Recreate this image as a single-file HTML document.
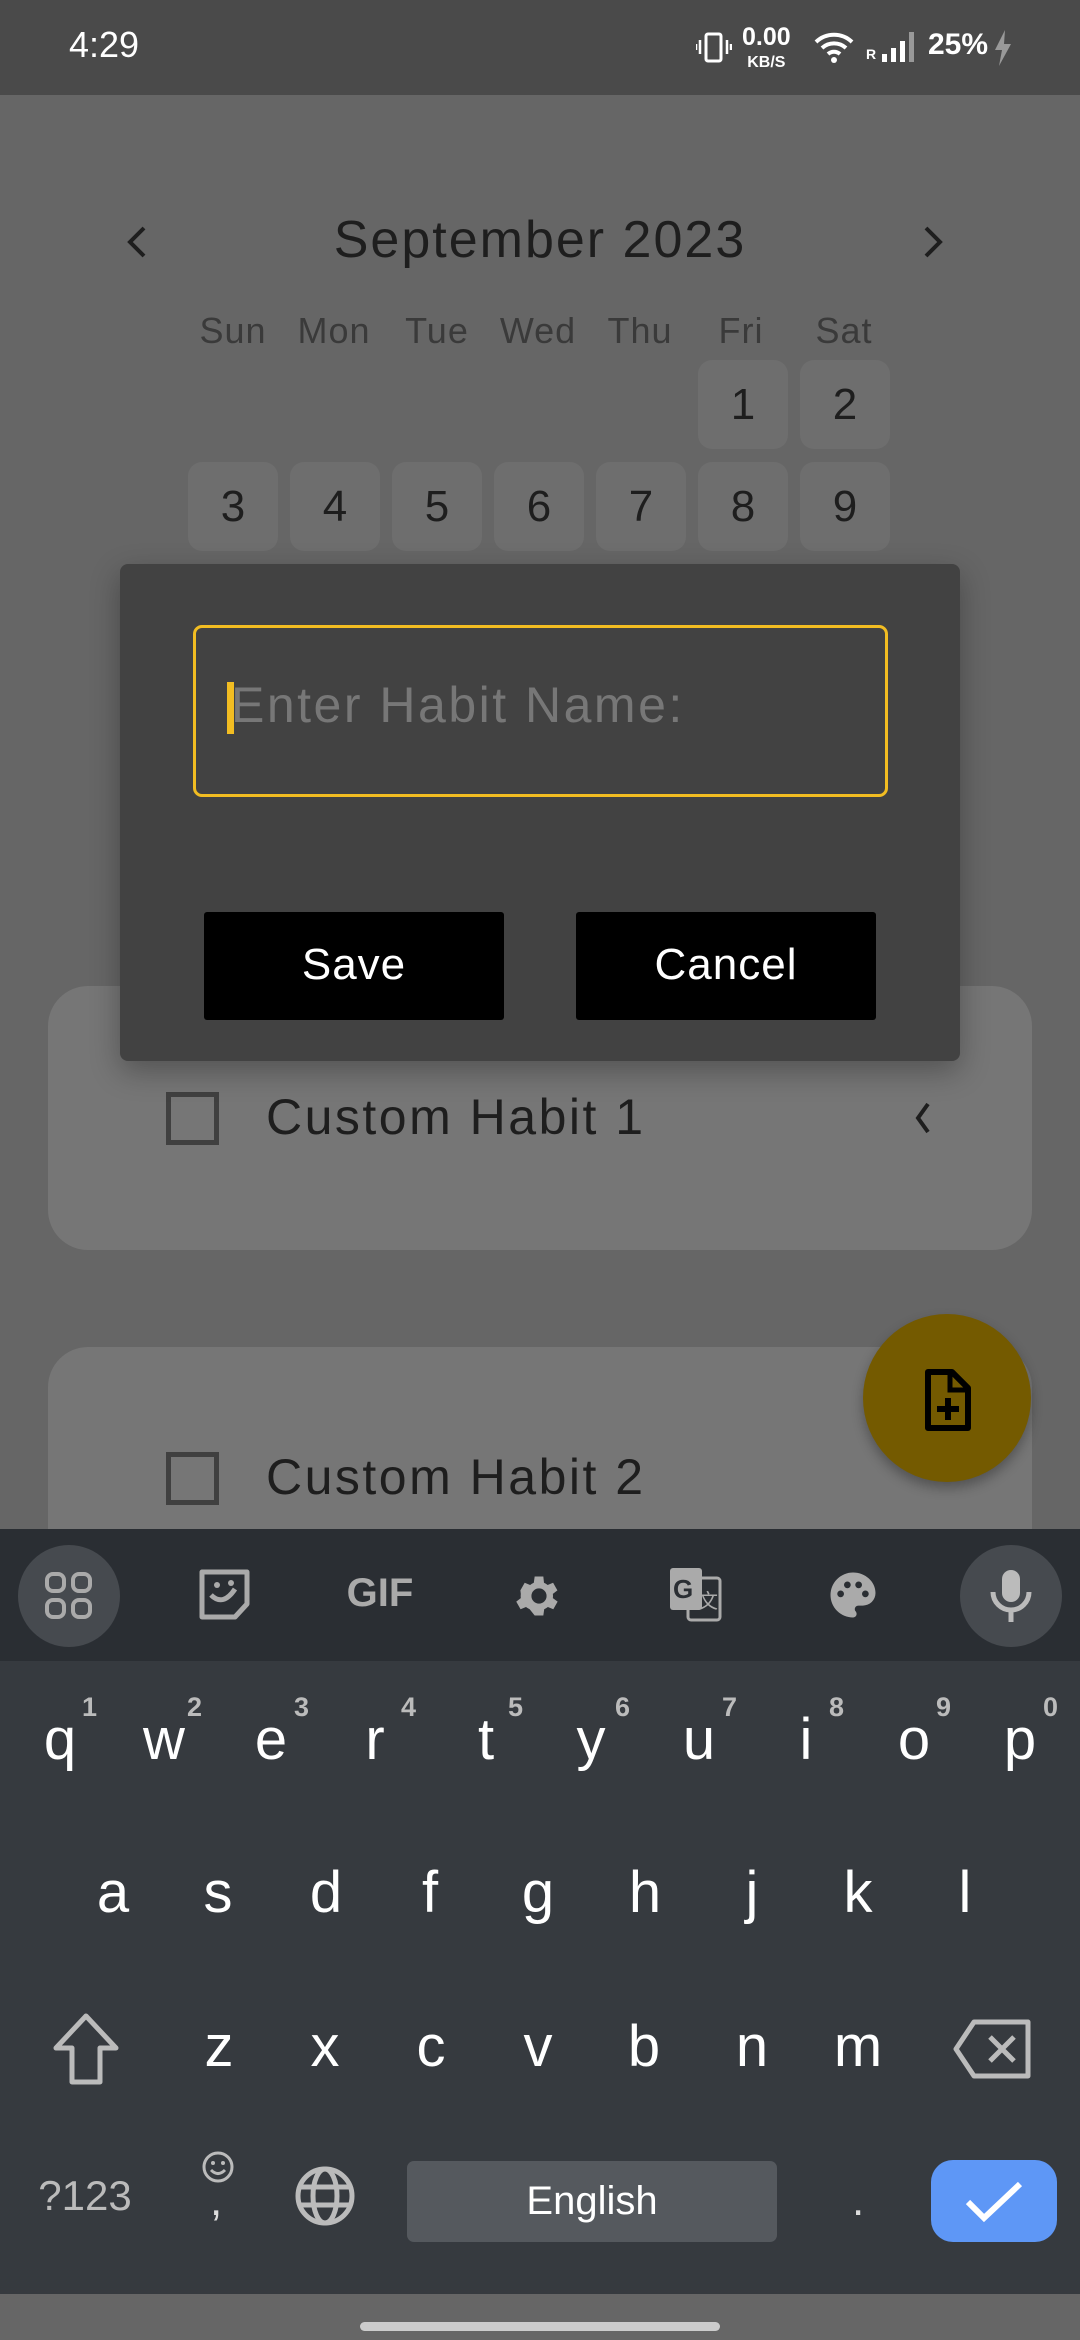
<!DOCTYPE html>
<html><head><meta charset="utf-8"><style>
*{margin:0;padding:0;box-sizing:border-box}
body{width:1080px;height:2340px;background:#666;position:relative;overflow:hidden;font-family:"Liberation Sans",sans-serif}
.a{position:absolute}
.c{text-align:center}
.wd{position:absolute;top:310px;width:100px;text-align:center;font-size:36px;color:#3a3a3a;letter-spacing:1px}
.day{position:absolute;width:90px;height:89px;border-radius:14px;background:#6e6e6e;color:#1e1e1e;font-size:44px;text-align:center;line-height:89px}
.k{position:absolute;width:100px;text-align:center;color:#fff;font-size:58px;line-height:70px}
.n{position:absolute;font-size:27px;color:#bbb;font-weight:bold}
</style></head><body>
<!-- status bar -->
<div class="a" style="left:0;top:0;width:1080px;height:95px;background:#4a4a4a"></div>
<div class="a" style="left:69px;top:24px;font-size:36px;color:#fff">4:29</div>
<svg class="a" style="left:696px;top:30px" width="36" height="36" viewBox="0 0 36 36"><rect x="10" y="4" width="15" height="27" rx="2" fill="none" stroke="#fff" stroke-width="3"/><path d="M4 10v14M31 10v14M0 14v6M35 14v6" stroke="#fff" stroke-width="2.5"/></svg>
<div class="a c" style="left:742px;top:26px;font-size:25px;color:#fff;font-weight:bold;line-height:22px">0.00<br><span style="font-size:16px">KB/S</span></div>
<svg class="a" style="left:814px;top:30px" width="40" height="34" viewBox="0 0 40 34"><path d="M2 12a26 26 0 0 1 36 0M8 18a18 18 0 0 1 24 0M14 24a9 9 0 0 1 12 0" stroke="#fff" stroke-width="4" fill="none"/><circle cx="20" cy="30" r="3" fill="#fff"/></svg>
<div class="a" style="left:866px;top:46px;font-size:14px;color:#fff;font-weight:bold">R</div>
<svg class="a" style="left:880px;top:30px" width="40" height="34"><rect x="2" y="24" width="5" height="8" fill="#fff"/><rect x="11" y="18" width="5" height="14" fill="#fff"/><rect x="20" y="11" width="5" height="21" fill="#fff"/><rect x="29" y="2" width="5" height="30" fill="#999"/></svg>
<div class="a" style="left:928px;top:28px;font-size:30px;color:#fff;font-weight:bold">25%</div>
<svg class="a" style="left:993px;top:30px" width="20" height="36"><path d="M12 0L2 20h7l-3 16 12-22h-7z" fill="#999"/></svg>

<!-- calendar -->
<svg class="a" style="left:122px;top:222px" width="30" height="40"><path d="M22 6L8 20l14 14" stroke="#1e1e1e" stroke-width="4" fill="none"/></svg>
<svg class="a" style="left:918px;top:222px" width="30" height="40"><path d="M8 6l14 14L8 34" stroke="#1e1e1e" stroke-width="4" fill="none"/></svg>
<div class="a c" style="left:240px;top:210px;width:600px;font-size:52px;color:#1e1e1e;letter-spacing:2px">September 2023</div>
<div class="wd" style="left:183px">Sun</div><div class="wd" style="left:284px">Mon</div><div class="wd" style="left:387px">Tue</div><div class="wd" style="left:488px">Wed</div><div class="wd" style="left:590px">Thu</div><div class="wd" style="left:691px">Fri</div><div class="wd" style="left:794px">Sat</div>
<div class="day" style="left:698px;top:360px">1</div><div class="day" style="left:800px;top:360px">2</div>
<div class="day" style="left:188px;top:462px">3</div><div class="day" style="left:290px;top:462px">4</div><div class="day" style="left:392px;top:462px">5</div><div class="day" style="left:494px;top:462px">6</div><div class="day" style="left:596px;top:462px">7</div><div class="day" style="left:698px;top:462px">8</div><div class="day" style="left:800px;top:462px">9</div>

<!-- cards -->
<div class="a" style="left:48px;top:986px;width:984px;height:264px;border-radius:40px;background:#767676"></div>
<div class="a" style="left:166px;top:1092px;width:53px;height:53px;border:5px solid #404040"></div>
<div class="a" style="left:266px;top:1088px;font-size:50px;color:#1e1e1e;letter-spacing:2.5px">Custom Habit 1</div>
<svg class="a" style="left:910px;top:1098px" width="26" height="40"><path d="M18 6L8 20l10 14" stroke="#1e1e1e" stroke-width="4" fill="none"/></svg>
<div class="a" style="left:48px;top:1347px;width:984px;height:300px;border-radius:40px;background:#767676"></div>
<div class="a" style="left:166px;top:1452px;width:53px;height:53px;border:5px solid #404040"></div>
<div class="a" style="left:266px;top:1448px;font-size:50px;color:#1e1e1e;letter-spacing:2.5px">Custom Habit 2</div>
<div class="a" style="left:863px;top:1314px;width:168px;height:168px;border-radius:50%;background:#745a00;box-shadow:0 6px 12px rgba(0,0,0,.3)"></div>
<svg class="a" style="left:922px;top:1368px" width="52" height="66" viewBox="0 0 52 66"><path d="M6 4h24l16 16v40H6z" fill="none" stroke="#000" stroke-width="6" stroke-linejoin="round"/><path d="M28 4v18h18" fill="none" stroke="#000" stroke-width="5"/><path d="M26 30v22M15 41h22" stroke="#000" stroke-width="6"/></svg>

<!-- dialog -->
<div class="a" style="left:120px;top:564px;width:840px;height:497px;background:#424242;border-radius:8px;box-shadow:0 10px 30px rgba(0,0,0,.3)"></div>
<div class="a" style="left:193px;top:625px;width:695px;height:172px;border:3px solid #f2bd22;border-radius:9px"></div>
<div class="a" style="left:227px;top:682px;width:7px;height:52px;background:#f2bd22"></div>
<div class="a" style="left:231px;top:676px;font-size:50px;color:#777;letter-spacing:2.5px">Enter Habit Name:</div>
<div class="a c" style="left:204px;top:912px;width:300px;height:108px;background:#000;border-radius:3px;color:#fff;font-size:44px;line-height:106px;letter-spacing:1px">Save</div>
<div class="a c" style="left:576px;top:912px;width:300px;height:108px;background:#000;border-radius:3px;color:#fff;font-size:44px;line-height:106px;letter-spacing:1px">Cancel</div>

<!-- keyboard -->
<div class="a" style="left:0;top:1529px;width:1080px;height:132px;background:#2a2e33"></div>
<div class="a" style="left:0;top:1661px;width:1080px;height:633px;background:#363a3f"></div>
<div class="a" style="left:0;top:2294px;width:1080px;height:46px;background:#666"></div>
<div class="a" style="left:360px;top:2322px;width:360px;height:9px;border-radius:5px;background:#ccc"></div>

<div class="a" style="left:18px;top:1545px;width:102px;height:102px;border-radius:50%;background:#464a4f"></div>
<svg class="a" style="left:45px;top:1572px" width="48" height="48"><g fill="none" stroke="#aaa" stroke-width="4"><rect x="2" y="2" width="17" height="17" rx="6"/><rect x="28" y="2" width="17" height="17" rx="6"/><rect x="2" y="28" width="17" height="17" rx="6"/><rect x="28" y="28" width="17" height="17" rx="6"/></g></svg>
<svg class="a" style="left:197px;top:1567px" width="56" height="56"><path d="M5 5h45v32L38 50H5z" fill="none" stroke="#aaa" stroke-width="5" stroke-linejoin="round"/><path d="M14 28q12 12 24-6" fill="none" stroke="#aaa" stroke-width="5"/><circle cx="20" cy="18" r="3" fill="#aaa"/><circle cx="34" cy="16" r="3" fill="#aaa"/></svg>
<div class="a c" style="left:340px;top:1571px;width:80px;font-size:40px;font-weight:bold;color:#aaa">GIF</div>
<svg class="a" style="left:513px;top:1570px" width="52" height="52" viewBox="0 0 24 24"><path fill="#aaa" d="M19.4 13a7.5 7.5 0 0 0 0-2l2.1-1.6-2-3.5-2.5 1a7 7 0 0 0-1.700-1L15 3h-4l-.4 2.9a7 7 0 0 0-1.7 1l-2.5-1-2 3.5L4.6 11a7.5 7.5 0 0 0 0 2l-2.1 1.6 2 3.5 2.5-1a7 7 0 0 0 1.7 1L11 21h4l.4-2.9a7 7 0 0 0 1.7-1l2.5 1 2-3.5zM13 15.5a3.5 3.5 0 1 1 0-7 3.5 3.5 0 0 1 0 7z" transform="translate(-1 0)"/></svg>
<svg class="a" style="left:668px;top:1566px" width="56" height="58"><rect x="2" y="2" width="32" height="42" rx="3" fill="#aaa"/><rect x="20" y="12" width="32" height="42" rx="3" fill="none" stroke="#aaa" stroke-width="3"/><text x="5" y="32" font-size="26" font-weight="bold" fill="#2a2e33" font-family="Liberation Sans">G</text><text x="30" y="42" font-size="20" fill="#aaa" font-family="Noto Sans CJK SC, sans-serif">文</text></svg>
<svg class="a" style="left:826px;top:1568px" width="54" height="54" viewBox="0 0 24 24"><path fill="#aaa" d="M12 2a10 10 0 0 0 0 20c1 0 1.6-.8 1.6-1.600 0-.4-.2-.8-.4-1.1-.3-.3-.4-.6-.4-1 0-.9.7-1.6 1.6-1.6h1.9A5.6 5.6 0 0 0 22 11.1C22 6.1 17.5 2 12 2zM6.5 13a1.5 1.5 0 1 1 0-3 1.5 1.5 0 0 1 0 3zm3-4a1.5 1.5 0 1 1 0-3 1.5 1.5 0 0 1 0 3zm5 0a1.5 1.5 0 1 1 0-3 1.5 1.5 0 0 1 0 3zm3 4a1.5 1.5 0 1 1 0-3 1.5 1.5 0 0 1 0 3z"/></svg>
<div class="a" style="left:960px;top:1545px;width:102px;height:102px;border-radius:50%;background:#464a4f"></div>
<svg class="a" style="left:986px;top:1568px" width="50" height="56"><rect x="16" y="2" width="18" height="32" rx="9" fill="#bbb"/><path d="M7 24a18 18 0 0 0 36 0M25 42v12" fill="none" stroke="#bbb" stroke-width="5"/></svg>

<!-- row1 -->
<div class="k" style="left:10px;top:1705px">q</div><div class="k" style="left:114px;top:1705px">w</div><div class="k" style="left:221px;top:1705px">e</div><div class="k" style="left:325px;top:1705px">r</div><div class="k" style="left:436px;top:1705px">t</div><div class="k" style="left:541px;top:1705px">y</div><div class="k" style="left:649px;top:1705px">u</div><div class="k" style="left:756px;top:1705px">i</div><div class="k" style="left:864px;top:1705px">o</div><div class="k" style="left:970px;top:1705px">p</div>
<div class="n" style="left:82px;top:1692px">1</div><div class="n" style="left:187px;top:1692px">2</div><div class="n" style="left:294px;top:1692px">3</div><div class="n" style="left:401px;top:1692px">4</div><div class="n" style="left:508px;top:1692px">5</div><div class="n" style="left:615px;top:1692px">6</div><div class="n" style="left:722px;top:1692px">7</div><div class="n" style="left:829px;top:1692px">8</div><div class="n" style="left:936px;top:1692px">9</div><div class="n" style="left:1043px;top:1692px">0</div>
<!-- row2 -->
<div class="k" style="left:63px;top:1858px">a</div><div class="k" style="left:168px;top:1858px">s</div><div class="k" style="left:276px;top:1858px">d</div><div class="k" style="left:380px;top:1858px">f</div><div class="k" style="left:488px;top:1858px">g</div><div class="k" style="left:595px;top:1858px">h</div><div class="k" style="left:702px;top:1858px">j</div><div class="k" style="left:808px;top:1858px">k</div><div class="k" style="left:915px;top:1858px">l</div>
<!-- row3 -->
<svg class="a" style="left:50px;top:2010px" width="72" height="80"><path d="M36 6L6 38h16v34h28V38h16z" fill="none" stroke="#bbb" stroke-width="5" stroke-linejoin="round"/></svg>
<div class="k" style="left:169px;top:2012px">z</div><div class="k" style="left:275px;top:2012px">x</div><div class="k" style="left:381px;top:2012px">c</div><div class="k" style="left:488px;top:2012px">v</div><div class="k" style="left:594px;top:2012px">b</div><div class="k" style="left:702px;top:2012px">n</div><div class="k" style="left:808px;top:2012px">m</div>
<svg class="a" style="left:952px;top:2018px" width="80" height="62"><path d="M22 4h54v54H22L4 31z" fill="none" stroke="#bbb" stroke-width="5" stroke-linejoin="round"/><path d="M38 19l24 24M62 19L38 43" stroke="#bbb" stroke-width="5"/></svg>
<!-- row4 -->
<div class="a c" style="left:25px;top:2172px;width:120px;font-size:42px;color:#bbb">?123</div>
<svg class="a" style="left:201px;top:2150px" width="34" height="34"><circle cx="17" cy="17" r="14" fill="none" stroke="#bbb" stroke-width="3"/><circle cx="12" cy="13" r="2" fill="#bbb"/><circle cx="22" cy="13" r="2" fill="#bbb"/><path d="M10 20q7 7 14 0" fill="none" stroke="#bbb" stroke-width="3"/></svg>
<div class="a" style="left:210px;top:2176px;font-size:44px;color:#ddd">,</div>
<svg class="a" style="left:294px;top:2165px" width="62" height="62" viewBox="0 0 62 62"><g fill="none" stroke="#bbb" stroke-width="5"><circle cx="31" cy="31" r="27"/><ellipse cx="31" cy="31" rx="12" ry="27"/><path d="M5 22h52M5 40h52"/></g></svg>
<div class="a c" style="left:407px;top:2161px;width:370px;height:81px;background:#55595e;border-radius:7px;color:#fff;font-size:40px;line-height:81px">English</div>
<div class="a" style="left:852px;top:2176px;font-size:44px;color:#ddd">.</div>
<div class="a" style="left:931px;top:2160px;width:126px;height:82px;background:#5e97f6;border-radius:22px"></div>
<svg class="a" style="left:964px;top:2180px" width="60" height="44"><path d="M4 22l16 16L56 4" fill="none" stroke="#fff" stroke-width="6"/></svg>
</body></html>
